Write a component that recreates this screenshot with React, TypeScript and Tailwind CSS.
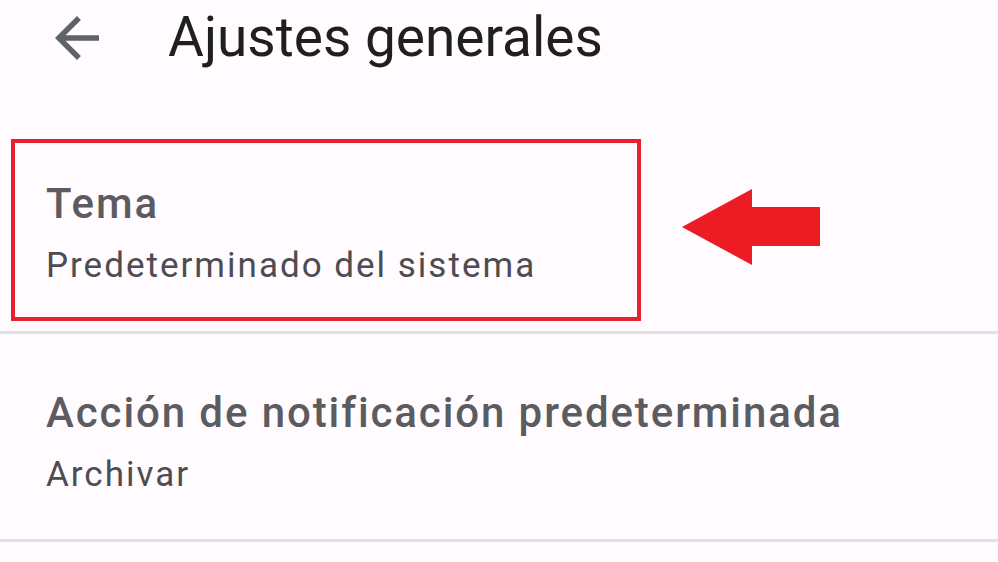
export default function App() {
  return (
    <div
      className="h-[562px] w-[998px] overflow-hidden bg-[#fffbfe] text-[#1f1f1f]"
      style={{ fontFamily: 'Roboto, "Noto Sans", sans-serif' }}
    >
      <header className="flex h-[125px] items-start">
        <div className="flex h-[75px] w-[168px] items-center pl-[44px]">
          <svg viewBox="0 0 24 24" className="h-[66px] w-[66px]" fill="#5f6368">
            <path d="M20 11H7.83l5.59-5.59L12 4l-8 8 8 8 1.41-1.41L7.83 13H20v-2z" />
          </svg>
        </div>
        <h1 className="text-[55px] leading-[75px] font-normal">Ajustes generales</h1>
      </header>

      <div className="relative border-b-[3px] border-[#e0dfe2] pt-[51px] pb-[43px] pl-[46px]">
        <div className="text-[42px] leading-[56px] font-medium tracking-[1.9px] text-[#5c5b60]">Tema</div>
        <div className="mt-3 text-[35px] leading-[44px] tracking-[2px] text-[#4d4c51]">
          Predeterminado del sistema
        </div>

        <div className="pointer-events-none absolute top-[14px] left-[11px] h-[182px] w-[630px] border-[4px] border-[#e5232f]" />
        <svg viewBox="0 0 140 76" className="absolute top-[64px] left-[681px] h-[76px] w-[140px]">
          <path d="M1 38 L71 0 L71 18 L139 18 L139 57 L71 57 L71 76 Z" fill="#ed1c24" strokeLinejoin="round" />
        </svg>
      </div>

      <div className="border-b-[3px] border-[#e0dfe2] pt-[51px] pb-[42px] pl-[46px]">
        <div className="text-[42px] leading-[56px] font-medium tracking-[1.9px] text-[#5c5b60]">
          Acción de notificación predeterminada
        </div>
        <div className="mt-3 text-[35px] leading-[44px] tracking-[2px] text-[#4d4c51]">Archivar</div>
      </div>
    </div>
  );
}
